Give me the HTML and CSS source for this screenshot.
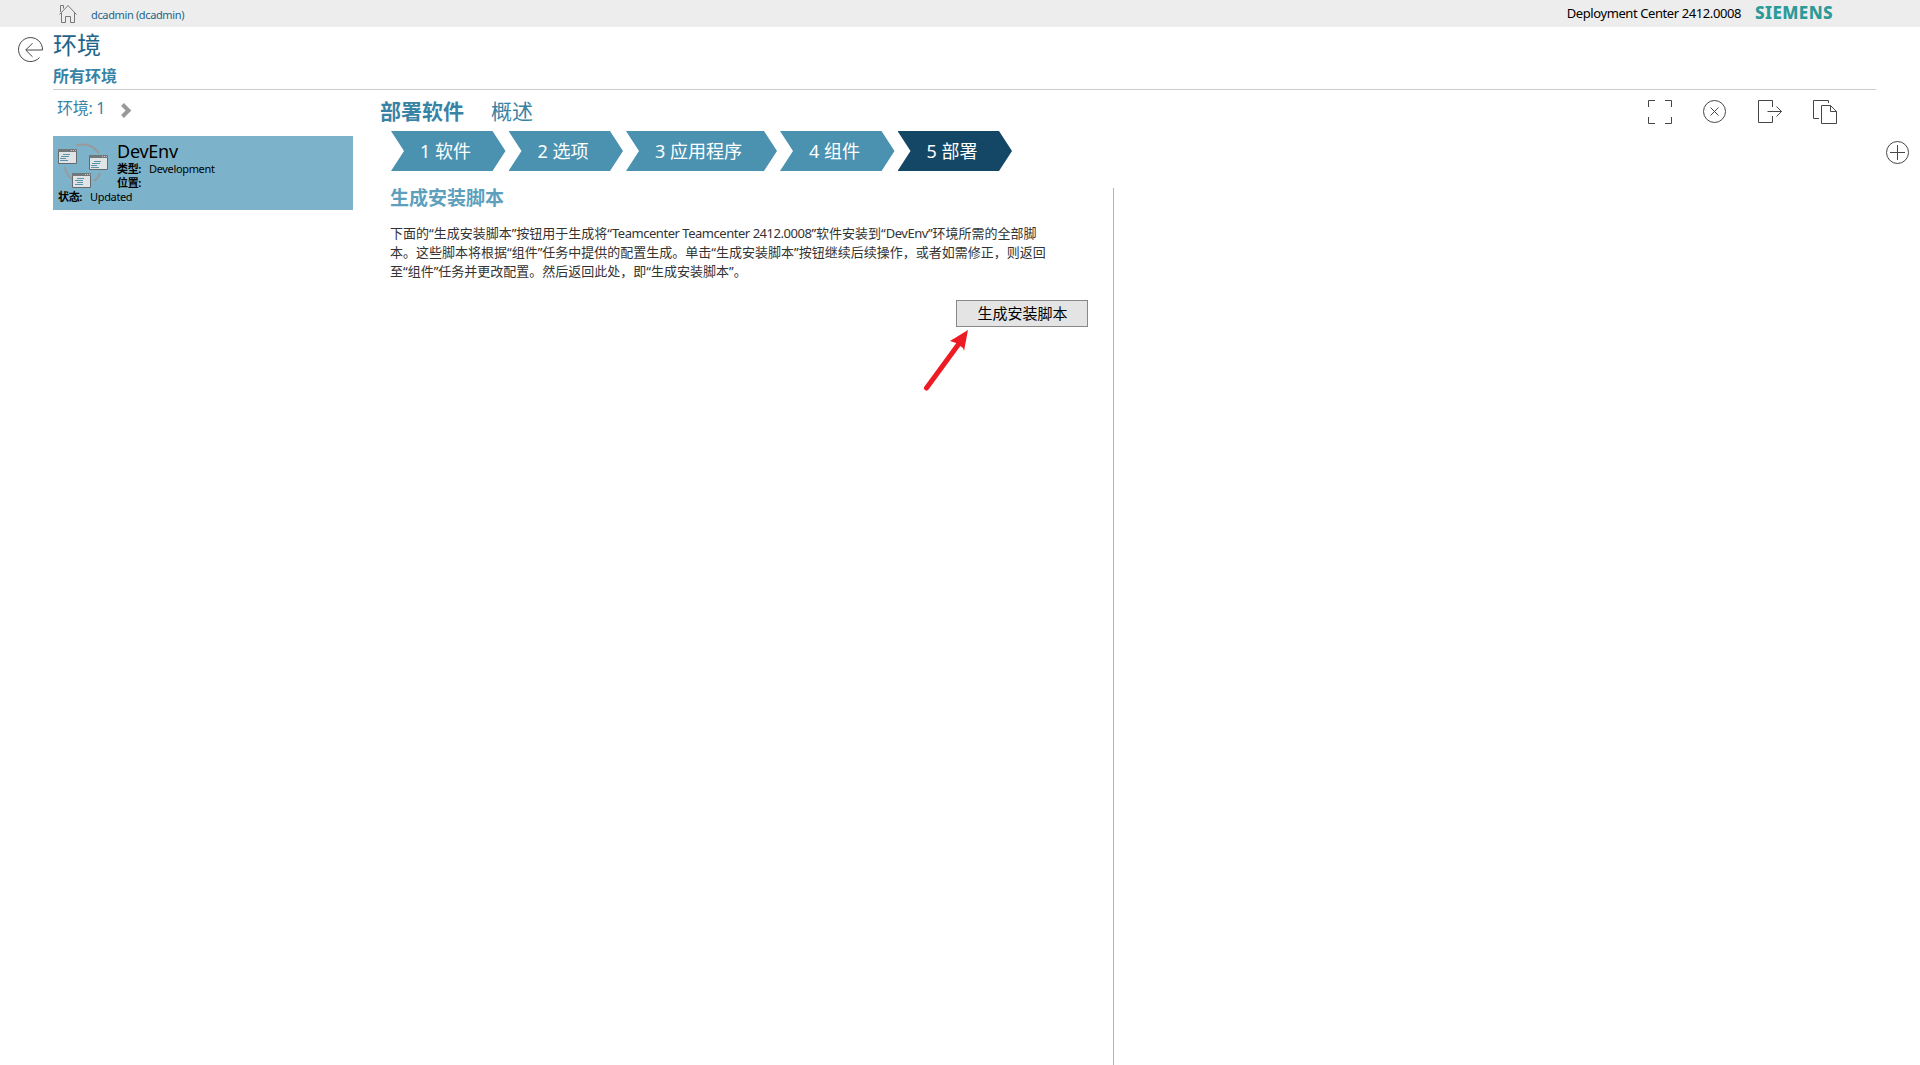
FILE: index.html
```html
<!DOCTYPE html>
<html lang="zh-CN">
<head>
<meta charset="utf-8">
<title>Deployment Center</title>
<link rel="stylesheet" href="styles.css">
</head>
<body>
<header class="topbar">
  <svg class="home" width="20" height="20" viewBox="0 0 20 20"><path d="M1.5 10.5 10 1.5l8.500 9M3.500 9v9.500h4v-6h5v6h4V9M2.500 8V1.500h3v3"/></svg>
  <span class="user">dcadmin (dcadmin)</span>
  <span class="product">Deployment Center 2412.0008</span>
  <span class="brand">SIEMENS</span>
</header>
<div class="shell">
  <aside class="left-rail">
    <svg width="26" height="26" viewBox="0 0 26 26"><path d="M21.500 20.500A12 12 0 1 1 24.500 13H8M14.500 6.200 7.700 13l6.800 6.800"/></svg>
  </aside>
  <main class="page">
    <div class="page-head">
      <h1 class="title">环境</h1>
      <div class="crumb">所有环境</div>
    </div>
    <div class="columns">
      <section class="env-list">
        <div class="count"><span>环境: 1</span>
          <svg width="10" height="15" viewBox="0 0 10 15"><path d="M1.500 1.500 7.500 7.500 1.500 13.500"/></svg>
        </div>
        <article class="card">
          <div class="card-top">
            <svg class="env-icon" width="52" height="46" viewBox="0 0 52 46">
              <path class="ring" d="M18 -3.500C27-6.500 36-3 41 4.500M7 18c.5 5 3 9 7 12M42 24c-1 3-3 6-6 8"/>
              <g><path class="pane" d="M.5.5h18v14H.5z"/><path class="bar" d="M0 0h19v3H0z"/><path class="dots" d="M13 1h1v1h-1zM15 1h1v1h-1zM17 1h1v1h-1z"/><path class="lines" d="M5 5.500h7M3 7.500h8M2 9.500h6M2 11.500h8"/></g>
              <g transform="translate(31 6)"><path class="pane" d="M.5.5h18v14H.5z"/><path class="bar" d="M0 0h19v3H0z"/><path class="dots" d="M13 1h1v1h-1zM15 1h1v1h-1zM17 1h1v1h-1z"/><path class="lines" d="M5 6.500h7M3 8.500h8M2 10.500h6M2 12.500h8"/></g>
              <g transform="translate(14 24)"><path class="pane" d="M.5.5h18v14H.5z"/><path class="bar" d="M0 0h19v3H0z"/><path class="dots" d="M13 1h1v1h-1zM15 1h1v1h-1zM17 1h1v1h-1z"/><path class="lines" d="M5 5.500h7M3 7.500h8M5 9.500h6M3 11.500h8"/></g>
            </svg>
            <div class="card-text">
              <div class="env-name">DevEnv</div>
              <div class="field"><b>类型:</b><span>Development</span></div>
              <div class="field"><b>位置:</b></div>
            </div>
          </div>
          <div class="field state"><b>状态:</b><span>Updated</span></div>
        </article>
      </section>
      <section class="work">
        <div class="work-head">
          <nav class="tabs"><span class="tab active">部署软件</span><span class="tab">概述</span></nav>
          <div class="tools">
            <svg width="24" height="24" viewBox="0 0 24 24"><path d="M.5 7V.5H7M17 .5h6.500V7M.5 17v6.500H7M17 23.500h6.500V17"/></svg>
            <svg width="24" height="24" viewBox="0 0 24 24"><circle cx="11.500" cy="11.500" r="11"/><path d="m7.500 7.500 8 8m0-8-8 8"/></svg>
            <svg width="24" height="24" viewBox="0 0 24 24"><path d="M14.500 7V.5H.5v22h14V16M9.500 11.500h14M18.500 6.500l5 5-5 5"/></svg>
            <svg width="25" height="24" viewBox="0 0 25 24"><path d="M15.500 3V.5H.5v18H6M8.500 5.500h9l6 6v12h-15zM17.500 5.500v6h6"/></svg>
          </div>
        </div>
        <ol class="steps">
          <li class="step">1 软件</li><li class="step">2 选项</li><li class="step wide">3 应用程序</li><li class="step">4 组件</li><li class="step current">5 部署</li>
        </ol>
        <div class="deploy">
          <h2 class="heading">生成安装脚本</h2>
          <p class="desc">下面的“生成安装脚本”按钮用于生成将“<span class="latin">Teamcenter Teamcenter 2412.0008</span>”软件安装到“<span class="latin">DevEnv</span>”环境所需的全部脚<br>本。这些脚本将根据“组件”任务中提供的配置生成。单击“生成安装脚本”按钮继续后续操作，或者如需修正，则返回<br>至“组件”任务并更改配置。然后返回此处，即“生成安装脚本”。</p>
          <div class="actions">
            <button class="generate">生成安装脚本</button>
            <svg class="pointer" width="46" height="62" viewBox="0 0 46 62"><path d="M5.500 58 37 15" stroke="#ed1c24" stroke-width="5" stroke-linecap="round"/><path fill="#ed1c24" d="M47 0 29 11l6 2 7 5 1 3z"/></svg>
          </div>
        </div>
      </section>
    </div>
  </main>
  <aside class="right-rail">
    <svg width="24" height="24" viewBox="0 0 24 24"><circle cx="11.500" cy="11.500" r="11"/><path d="M11.500 4v15M4 11.500h15"/></svg>
  </aside>
</div>
</body>
</html>
```
FILE: styles.css
```css
* { box-sizing: border-box; }
html, body { height: 100%; }
body {
  margin: 0;
  display: flex;
  flex-direction: column;
  overflow: hidden;
  background: #fff;
  color: #000;
  font-family: "Noto Sans", "Noto Sans CJK SC", sans-serif;
  white-space: nowrap;
}
svg { display: block; flex: none; fill: none; stroke: #464646; overflow: visible; }
h1, h2, p, ol { margin: 0; padding: 0; font-weight: 400; }

.topbar { height: 27px; flex: none; display: flex; align-items: center; padding: 0 82px 0 58px; background: #ededed; }
.home { stroke: #777; margin-top: 1px; }
.user { margin-left: 13px; font-size: 11px; line-height: 20px; letter-spacing: -.36px; color: #1e6489; padding-top: 3px; }
.product { margin-left: auto; font-size: 13px; letter-spacing: -.41px; line-height: 26px; padding-bottom: 1px; }
.brand { width: 83px; margin-left: 14px; font-size: 17px; font-weight: 800; line-height: 24px; letter-spacing: .4px; color: #2d9a9a; padding-bottom: 2px; }

.shell { flex: 1; min-height: 0; display: flex; }
.left-rail { width: 53px; padding: 10px 0 0 18px; }
.right-rail { width: 44px; padding: 114px 0 0 10px; }
.page { flex: 1; min-width: 0; display: flex; flex-direction: column; }
.page-head { height: 63px; flex: none; border-bottom: 1px solid #ccc; }
.title { height: 36px; font-size: 24px; line-height: 36px; color: #1e6489; }
.crumb { font-size: 16px; line-height: 26px; font-weight: 700; color: #3883a5; }
.columns { flex: 1; min-height: 0; display: flex; }

.env-list { width: 327px; flex: none; }
.count { height: 46px; display: flex; gap: 16px; padding: 5px 0 0 4px; font-size: 16px; line-height: 26px; letter-spacing: -.3px; color: #3883a5; }
.count svg { margin-top: 8px; stroke: #999; stroke-width: 4; }
.card { width: 300px; height: 74px; background: #7db3ca; padding-left: 5px; }
.card-top { height: 54px; display: flex; gap: 7px; }
.env-icon { margin-top: 13px; stroke: none; }
.ring { stroke: #999; stroke-width: 2; }
.pane { fill: #e0e4e6; stroke: #66696b; }
.bar { fill: #737779; }
.dots { fill: #c9cccd; }
.lines { stroke: #5b93ab; }
.card-text { padding-top: 3px; }
.env-name { height: 23px; font-size: 18px; line-height: 24px; letter-spacing: -.25px; }
.field { display: flex; gap: 8px; height: 14px; font-size: 11px; line-height: 14px; letter-spacing: -.35px; }

.work { flex: 1; min-width: 0; display: flex; flex-direction: column; }
.work-head { height: 41px; flex: none; display: flex; justify-content: space-between; padding-right: 38px; }
.tabs { display: flex; gap: 27px; padding-top: 5px; font-size: 21px; line-height: 32px; color: #3883a5; }
.active { font-weight: 700; }
.tools { display: flex; gap: 31px; padding-top: 10px; }
.steps { display: flex; flex: none; gap: 3px; height: 40px; padding-left: 11px; list-style: none; }
.step { width: 114.500px; padding: 0 0 2px 29px; font-size: 18px; line-height: 40px; letter-spacing: 0; color: #fff; background: #4b92b1; clip-path: polygon(0 0, calc(100% - 13px) 0, 100% 50%, calc(100% - 13px) 100%, 0 100%, 13px 50%); }
.wide { width: 151px; }
.current { background: #134765; }
.deploy { width: 734px; flex: 1; margin-top: 17px; padding-left: 10px; border-right: 1px solid #b4b4b4; }
.heading { height: 36px; font-size: 19px; line-height: 20px; font-weight: 700; color: #5d9fbd; }
.desc { height: 56px; font-size: 13px; line-height: 19px; color: #333; }
.latin { letter-spacing: -.47px; }
.actions { position: relative; width: 698px; display: flex; justify-content: flex-end; padding-top: 20px; }
.generate { width: 132px; height: 27px; padding: 0 0 1px 1px; border: 1px solid #888; border-radius: 0; background: #e4e4e4; color: #000; font: 15px/24px "Noto Sans", "Noto Sans CJK SC", sans-serif; }
.pointer { position: absolute; left: 531px; top: 50px; stroke: none; }
```
